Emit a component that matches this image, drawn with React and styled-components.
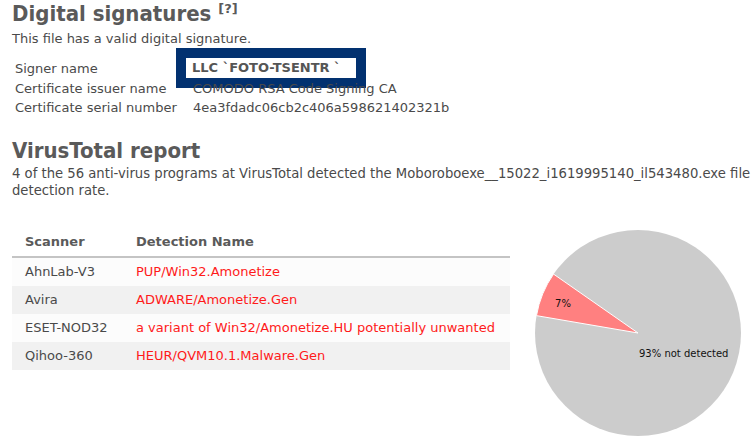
import styled, { createGlobalStyle } from "styled-components";

const GlobalStyle = createGlobalStyle`
  html, body {
    margin: 0;
    padding: 0;
    background: #ffffff;
    overflow: hidden;
  }
  body {
    font-family: "DejaVu Sans", Verdana, sans-serif;
    color: #4a4a4a;
  }
`;

const detections = [
  { scanner: "AhnLab-V3", name: "PUP/Win32.Amonetize" },
  { scanner: "Avira", name: "ADWARE/Amonetize.Gen" },
  { scanner: "ESET-NOD32", name: "a variant of Win32/Amonetize.HU potentially unwanted" },
  { scanner: "Qihoo-360", name: "HEUR/QVM10.1.Malware.Gen" },
];

const certificate = [
  { label: "Signer name", value: "LLC `FOTO-TSENTR `", highlight: true },
  { label: "Certificate issuer name", value: "COMODO RSA Code Signing CA" },
  { label: "Certificate serial number", value: "4ea3fdadc06cb2c406a598621402321b" },
];

const Pie = ({ percent }) => {
  const cx = 103;
  const cy = 103;
  const r = 103;
  const start = (189.7 * Math.PI) / 180;
  const end = start + (percent / 100) * 2 * Math.PI;
  const p1 = [cx + r * Math.cos(start), cy + r * Math.sin(start)];
  const p2 = [cx + r * Math.cos(end), cy + r * Math.sin(end)];
  const slice = `M${cx},${cy} L${p1[0]},${p1[1]} A${r},${r} 0 0 1 ${p2[0]},${p2[1]} Z`;
  return (
    <svg width="206" height="206" viewBox="0 0 206 206">
      <circle cx={cx} cy={cy} r={r} fill="#cccccc" />
      <path d={slice} fill="#ff8080" stroke="#ffffff" strokeWidth="1" />
      <text x="20" y="77" fontSize="10" fill="#111" fontFamily="DejaVu Sans, sans-serif">
        {percent}%
      </text>
      <text x="104" y="127" fontSize="10" fill="#111" fontFamily="DejaVu Sans, sans-serif">
        {100 - percent}% not detected
      </text>
    </svg>
  );
};

const App = () => {
  return (
    <Page>
      <GlobalStyle />
      <Heading>
        Digital signatures <Help>[?]</Help>
      </Heading>
      <Lead>This file has a valid digital signature.</Lead>
      <CertTable>
        <tbody>
          {certificate.map((row) => (
            <tr key={row.label}>
              <CertLabel>{row.label}</CertLabel>
              <CertValue>
                {row.value}
                {row.highlight && (
                  <Marker>
                    <span>{row.value}</span>
                  </Marker>
                )}
              </CertValue>
            </tr>
          ))}
        </tbody>
      </CertTable>

      <Heading $second>VirusTotal report</Heading>
      <Lead $wide>
        4 of the 56 anti-virus programs at VirusTotal detected the Moboroboexe__15022_i1619995140_il543480.exe file
        <br />
        detection rate.
      </Lead>

      <ReportRow>
        <ScanTable>
          <thead>
            <tr>
              <ScanHead $first>Scanner</ScanHead>
              <ScanHead>Detection Name</ScanHead>
            </tr>
          </thead>
          <tbody>
            {detections.map((d, i) => (
              <ScanRow key={d.scanner} $odd={i % 2 === 1}>
                <ScanCell $first>{d.scanner}</ScanCell>
                <ScanCell $red>{d.name}</ScanCell>
              </ScanRow>
            ))}
          </tbody>
        </ScanTable>
        <Chart>
          <Pie percent={7} />
        </Chart>
      </ReportRow>
    </Page>
  );
};

const Page = styled.div`
  padding: 0 0 0 12px;
  width: 739px;
  overflow: hidden;
`;

const Heading = styled.h2`
  margin: ${(p) => (p.$second ? "19px 0 0" : "0")};
  padding-top: 1px;
  font-family: "DejaVu Sans Condensed", "DejaVu Sans", sans-serif;
  font-size: 22px;
  line-height: 26px;
  font-weight: bold;
  color: #5a5a5a;
`;

const Help = styled.sup`
  font-family: "DejaVu Sans", sans-serif;
  font-size: 13px;
  vertical-align: 8px;
  line-height: 0;
  color: #5a5a5a;
`;

const Lead = styled.p`
  margin: ${(p) => (p.$wide ? "1px 0 0" : "3px 0 0")};
  font-size: ${(p) => (p.$wide ? "13.2px" : "13px")};
  line-height: 17px;
  color: #4a4a4a;
  white-space: nowrap;
`;

const CertTable = styled.table`
  margin-top: 12px;
  border-collapse: collapse;
  font-size: 13px;
  color: #4a4a4a;
`;

const CertLabel = styled.td`
  padding: 1px 0 1px 3px;
  width: 178px;
  line-height: 17.5px;
`;

const CertValue = styled.td`
  position: relative;
  padding: 1px 0;
  line-height: 17.5px;
`;

const Marker = styled.div`
  position: absolute;
  left: -17px;
  top: -11px;
  width: 170px;
  height: 20px;
  border: 10px solid #023170;
  background: #ffffff;
  display: flex;
  align-items: center;
  span {
    padding-left: 6px;
    font-weight: bold;
    color: #555555;
  }
`;

const ReportRow = styled.div`
  display: flex;
  align-items: flex-start;
  margin-top: 30px;
`;

const ScanTable = styled.table`
  width: 498px;
  flex-shrink: 0;
  border-collapse: collapse;
  font-size: 13px;
`;

const ScanHead = styled.th`
  text-align: left;
  font-weight: bold;
  color: #5a5a5a;
  height: 26px;
  padding: 0 0 1px ${(p) => (p.$first ? "13px" : "0")};
  width: ${(p) => (p.$first ? "111px" : "auto")};
  border-bottom: 2px solid #c4c4c4;
`;

const ScanRow = styled.tr`
  background: ${(p) => (p.$odd ? "#f1f1f1" : "#fcfcfc")};
`;

const ScanCell = styled.td`
  height: 28px;
  padding: 0 0 0 ${(p) => (p.$first ? "13px" : "0")};
  color: ${(p) => (p.$red ? "#ff1a1a" : "#4a4a4a")};
`;

const Chart = styled.div`
  margin: 1px 0 0 25px;
  line-height: 0;
`;

export default App;
